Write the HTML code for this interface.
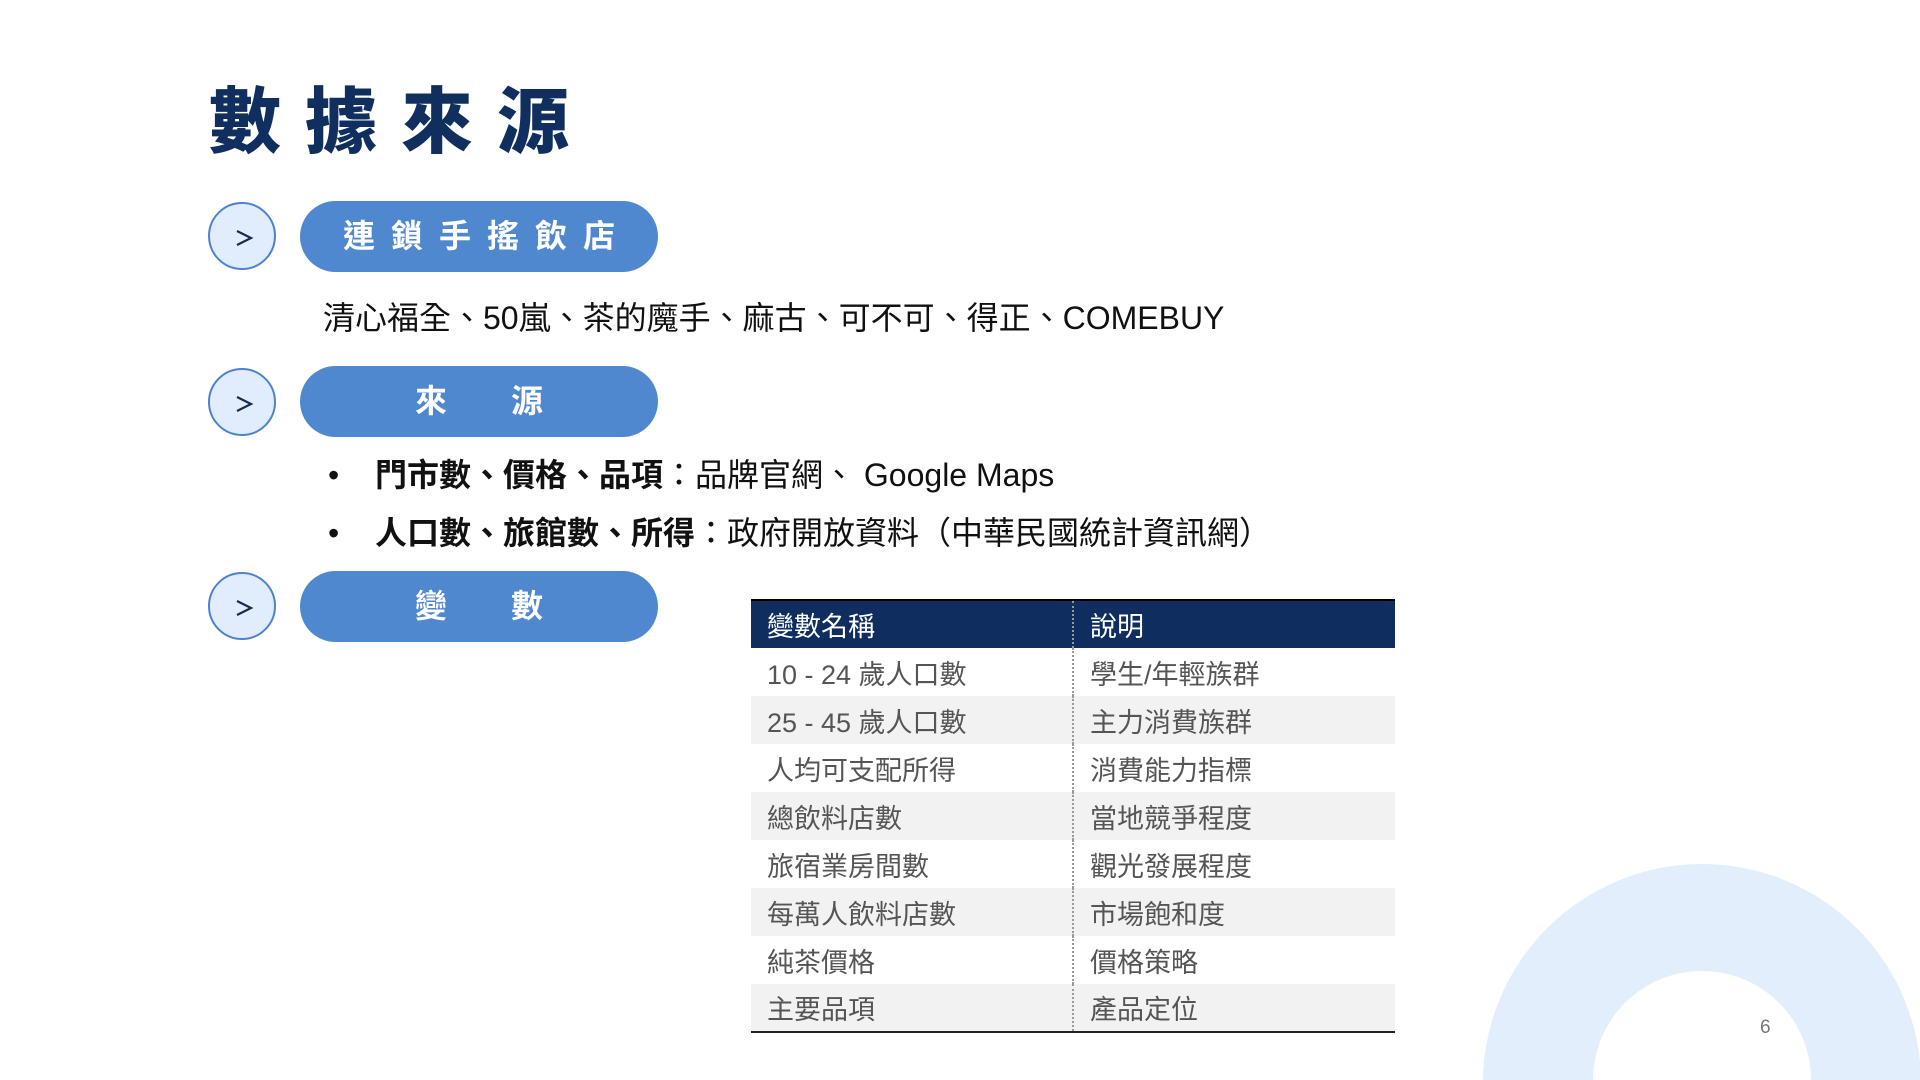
<!DOCTYPE html>
<html style="width:1920px;height:1080px;overflow:hidden;"><head><meta charset="utf-8"><style>
html,body{margin:0;width:1920px;height:1080px;overflow:hidden;}
body{position:relative;background:#fff;font-family:"Liberation Sans","Noto Sans CJK TC",sans-serif;}
.wrap{position:absolute;left:0;top:0;width:1920px;height:1080px;overflow:hidden;}
.abs{position:absolute;}
.title{left:209px;top:78px;font-size:72px;font-weight:900;color:#102f5f;letter-spacing:24px;line-height:90px;white-space:nowrap;}
.circ{width:68px;height:68px;border-radius:50%;background:#e1edfc;border:2px solid #4d82cf;box-sizing:border-box;}
.circ svg{position:absolute;left:24px;top:24px;}
.pill{left:300px;width:358px;height:71px;border-radius:36px;background:#5088d0;color:#fff;font-weight:bold;font-size:32px;text-align:center;line-height:71px;white-space:pre;}
.txt{font-size:32px;color:#111;white-space:nowrap;line-height:40px;}
table{position:absolute;left:751px;top:599px;width:644px;border-collapse:collapse;font-size:27px;color:#555;}
td{height:48px;padding:0 0 0 16px;box-sizing:border-box;}
td:first-child{width:322px;border-right:2px dotted #999;}
tr.h td{background:#0f2d5e;color:#fff;height:48px;border-top:2px solid #000;}
tr.g td{background:#f2f2f2;}
tr:last-child td{border-bottom:2px solid #222;}
</style></head><body><div class="wrap">
<div class="abs" style="left:1483px;top:864px;width:438px;height:216px;overflow:hidden;"><div style="width:438px;height:438px;border-radius:50%;background:#e3eefc;"></div></div>
<div class="abs" style="left:1593px;top:971px;width:218px;height:109px;overflow:hidden;"><div style="width:218px;height:218px;border-radius:50%;background:#fff;"></div></div>
<div class="abs" style="left:1760px;top:1017px;font-size:19px;color:#777;">6</div>
<div class="abs title">數據來源</div>
<div class="abs circ" style="left:208px;top:202px;"><svg width="20" height="20" viewBox="0 0 20 20"><path d="M3 3 L17 10 L3 17" fill="none" stroke="#1a2a4a" stroke-width="2.2"/></svg></div>
<div class="abs pill" style="top:201px;letter-spacing:16px;text-indent:16px;">連鎖手搖飲店</div>
<div class="abs txt" style="left:323px;top:298px;">清心福全、50嵐、茶的魔手、麻古、可不可、得正、COMEBUY</div>
<div class="abs circ" style="left:208px;top:368px;"><svg width="20" height="20" viewBox="0 0 20 20"><path d="M3 3 L17 10 L3 17" fill="none" stroke="#1a2a4a" stroke-width="2.2"/></svg></div>
<div class="abs pill" style="top:366px;letter-spacing:64px;text-indent:64px;">來源</div>
<div class="abs txt" style="left:328px;top:455px;">•</div>
<div class="abs txt" style="left:375px;top:455px;"><b>門市數、價格、品項</b>：品牌官網、 Google Maps</div>
<div class="abs txt" style="left:328px;top:513px;">•</div>
<div class="abs txt" style="left:375px;top:513px;"><b>人口數、旅館數、所得</b>：政府開放資料（中華民國統計資訊網）</div>
<div class="abs circ" style="left:208px;top:572px;"><svg width="20" height="20" viewBox="0 0 20 20"><path d="M3 3 L17 10 L3 17" fill="none" stroke="#1a2a4a" stroke-width="2.2"/></svg></div>
<div class="abs pill" style="top:571px;letter-spacing:64px;text-indent:64px;">變數</div>
<table>
<tr class="h"><td>變數名稱</td><td>說明</td></tr>
<tr><td>10 - 24 歲人口數</td><td>學生/年輕族群</td></tr>
<tr class="g"><td>25 - 45 歲人口數</td><td>主力消費族群</td></tr>
<tr><td>人均可支配所得</td><td>消費能力指標</td></tr>
<tr class="g"><td>總飲料店數</td><td>當地競爭程度</td></tr>
<tr><td>旅宿業房間數</td><td>觀光發展程度</td></tr>
<tr class="g"><td>每萬人飲料店數</td><td>市場飽和度</td></tr>
<tr><td>純茶價格</td><td>價格策略</td></tr>
<tr class="g"><td>主要品項</td><td>產品定位</td></tr>
</table>
</div></body></html>
